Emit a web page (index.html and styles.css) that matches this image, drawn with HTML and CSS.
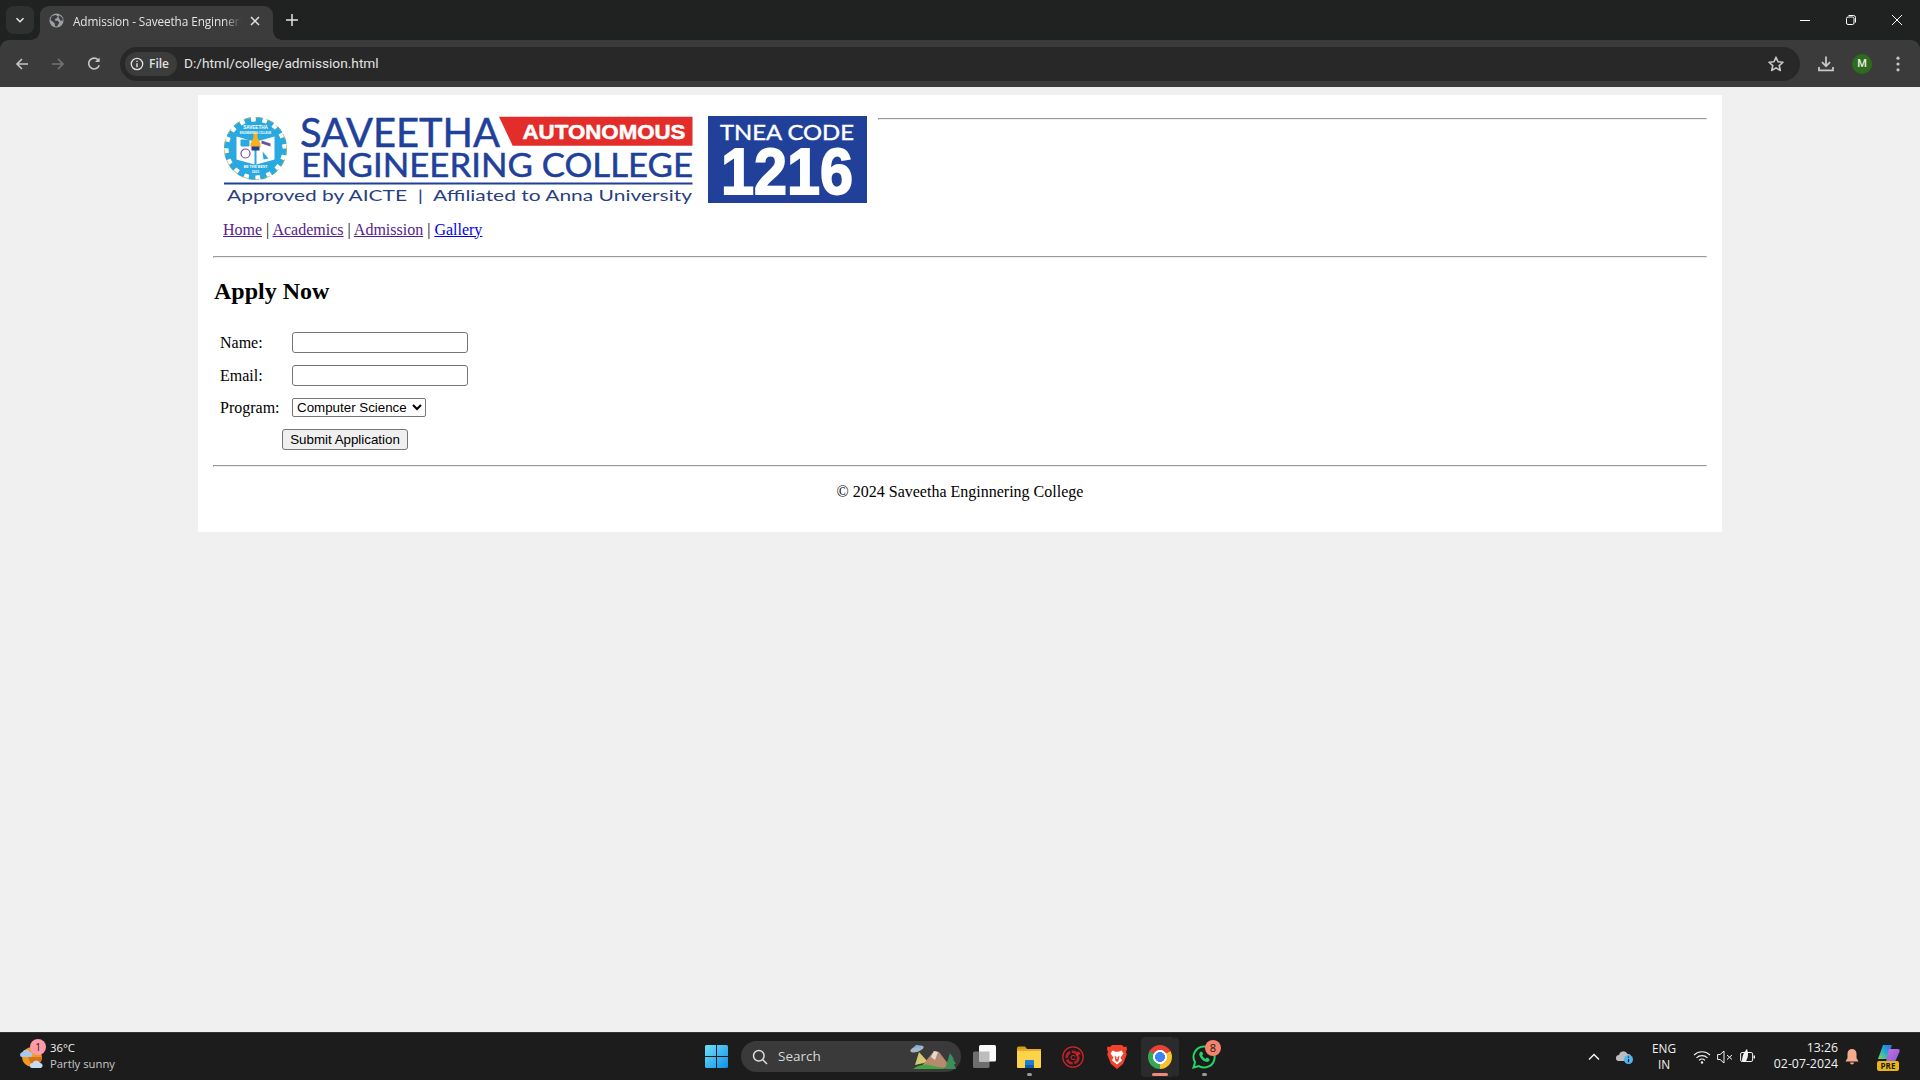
FILE: index.html
```html
<!DOCTYPE html>
<html lang="en">
<head>
<meta charset="utf-8">
<title>Admission - Saveetha Enginnering College</title>
<link rel="stylesheet" href="styles.css">
</head>
<body>
<div class="app">
  <div class="tabstrip">
    <div class="tabsearch"><svg width="12" height="12" viewBox="0 0 12 12"><path d="M2.5 4.200 6 7.700l3.500-3.500" fill="none" stroke="#e3e3e3" stroke-width="1.600"/></svg></div>
    <div class="tab">
      <svg class="favicon" width="15" height="15" viewBox="0 0 16 16"><circle cx="8" cy="8" r="7.500" fill="#9aa0a6"/><path d="M3 3.200 7 2.200 9.500 3.500 8 5.800 6.200 6.300 6.800 8.200 9.500 8.200 11 10.300 8.500 14.500 6.500 14 6 10.800 3.500 8.800 1.500 7.500zM11 2.500l3 2.500 1 3-2.500.2-1.500-2.200-1-1.800z" fill="#3c3c3c"/></svg>
      <span class="tabtitle">Admission - Saveetha Enginnering College</span>
      <svg class="tabclose" width="10" height="10" viewBox="0 0 10 10"><path d="M1 1l8 8M9 1 1 9" stroke="#e3e3e3" stroke-width="1.500"/></svg>
    </div>
    <svg class="newtab" width="14" height="14" viewBox="0 0 14 14"><path d="M7 1v12M1 7h12" stroke="#e3e3e3" stroke-width="1.500"/></svg>
    <div class="winctrls">
      <div class="winbtn"><svg width="12" height="12" viewBox="0 0 12 12"><path d="M1 6.500h10" stroke="#fff" stroke-width="1"/></svg></div>
      <div class="winbtn"><svg width="12" height="12" viewBox="0 0 12 12"><rect x="1.500" y="3" width="7.500" height="7.500" rx="1.500" fill="none" stroke="#fff"/><path d="M3.500 1.500h5a2 2 0 0 1 2 2v5" fill="none" stroke="#fff"/></svg></div>
      <div class="winbtn"><svg width="14" height="14" viewBox="0 0 14 14"><path d="M2 2l10 10M12 2 2 12" stroke="#fff" stroke-width="1"/></svg></div>
    </div>
  </div>

  <div class="toolbar">
    <div class="tbtn"><svg width="16" height="16" viewBox="0 0 16 16"><path d="M14 8H3M8 3 3 8l5 5" fill="none" stroke="#c7c7c7" stroke-width="1.600"/></svg></div>
    <div class="tbtn"><svg width="16" height="16" viewBox="0 0 16 16"><path d="M2 8h11M8 3l5 5-5 5" fill="none" stroke="#747474" stroke-width="1.600"/></svg></div>
    <div class="tbtn"><svg width="16" height="16" viewBox="0 0 16 16"><path d="M13.200 9.200A5.400 5.400 0 1 1 12 3.800" fill="none" stroke="#c7c7c7" stroke-width="1.600"/><path d="M13.600 1.500v4.600H9z" fill="#c7c7c7"/></svg></div>
    <div class="omnibox">
      <div class="filepill">
        <svg width="14" height="14" viewBox="0 0 14 14"><circle cx="7" cy="7" r="5.700" fill="none" stroke="#e3e3e3" stroke-width="1.300"/><path d="M7 6.200v4M7 3.700v1.400" stroke="#e3e3e3" stroke-width="1.400"/></svg>
        <span>File</span>
      </div>
      <span class="url">D:/html/college/admission.html</span>
      <svg class="star" width="18" height="18" viewBox="0 0 18 18"><path d="M9 2.200l2 4.600 5 .45-3.800 3.300 1.150 4.900L9 12.900l-4.350 2.550 1.150-4.900L2 7.250l5-.45z" fill="none" stroke="#c7c7c7" stroke-width="1.600" stroke-linejoin="round"/></svg>
    </div>
    <div class="tbtn"><svg width="18" height="18" viewBox="0 0 18 18"><path d="M9 1.500v9.500M5 7.200 9 11.200l4-4" fill="none" stroke="#c7c7c7" stroke-width="1.800"/><path d="M2 12v3.400h14V12" fill="none" stroke="#c7c7c7" stroke-width="1.800"/></svg></div>
    <div class="tbtn"><span class="avatar">M</span></div>
    <div class="tbtn"><svg width="6" height="16" viewBox="0 0 6 16"><circle cx="3" cy="2.200" r="1.600" fill="#c7c7c7"/><circle cx="3" cy="8" r="1.600" fill="#c7c7c7"/><circle cx="3" cy="13.800" r="1.600" fill="#c7c7c7"/></svg></div>
  </div>

  <div class="viewport">
    <main class="container">
      <header class="masthead">
        <svg class="logo" width="654" height="99" viewBox="0 0 654 99">
          <g transform="translate(42.5 38.5)">
            <circle r="27" fill="#2aa8e0"/>
            <circle r="28.500" fill="none" stroke="#2aa8e0" stroke-width="6" stroke-dasharray="6.500 4.700"/>
            <circle r="31" fill="none" stroke="#b9b84a" stroke-width="1" stroke-dasharray="6.500 4.700" opacity=".8"/>
            <path d="M-19 -12 -1 -7V16l-18-5zM19 -12 1 -7V16l18-5z" fill="#fff"/>
            <rect x="-15" y="-9" width="9" height="7" rx="1" fill="#2aa8e0"/>
            <circle cx="-10" cy="5" r="4.500" fill="none" stroke="#7a4fa0" stroke-width="1.200"/>
            <path d="M6 -8l9 3v3l-9-3z" fill="#6a4f9f"/>
            <path d="M7 3l6 7-5 1z" fill="#2aa8e0"/>
            <path d="M-2 -16h4v5l3 6v4h-10v-4l3-6z" fill="#f4b120"/>
            <rect x="-4" y="-2" width="8" height="4" fill="#2b3c8f"/>
            <text class="gear-txt" y="-19.500" text-anchor="middle" font-size="4.600">SAVEETHA</text>
            <text class="gear-txt" y="-14.500" text-anchor="middle" font-size="2.600">ENGINEERING COLLEGE</text>
            <text class="gear-txt" y="19" text-anchor="middle" font-size="3.600">BE THE BEST</text>
            <text class="gear-txt" y="24" text-anchor="middle" font-size="3.400">2001</text>
          </g>
          <text class="l-name" x="87" y="37" font-size="41.500" textLength="200" lengthAdjust="spacingAndGlyphs">SAVEETHA</text>
          <path d="M286 6.700H479.500V35.700H299.700z" fill="#e32d2a"/>
          <text class="l-auto" x="309.500" y="29.300" font-size="20" textLength="163" lengthAdjust="spacingAndGlyphs">AUTONOMOUS</text>
          <text class="l-name" x="88" y="67" font-size="33.500" textLength="392" lengthAdjust="spacingAndGlyphs">ENGINEERING COLLEGE</text>
          <rect x="11" y="72.500" width="468.500" height="2" fill="#21409a"/>
          <text class="l-sub" x="14" y="90.800" font-size="16" textLength="465" lengthAdjust="spacingAndGlyphs">Approved by AICTE  |  Affiliated to Anna University</text>
          <rect x="495" y="6" width="159" height="87" fill="#21409a"/>
          <text class="l-tnea" x="507" y="30" font-size="21" textLength="134" lengthAdjust="spacingAndGlyphs">TNEA CODE</text>
          <text class="l-code" x="508" y="84" font-size="65" textLength="132" lengthAdjust="spacingAndGlyphs">1216</text>
        </svg>
        <hr class="side-rule">
      </header>
      <nav class="mainnav">
        <a class="visited" href="#">Home</a> | <a class="visited" href="#">Academics</a> | <a class="visited" href="#">Admission</a> | <a class="fresh" href="#">Gallery</a>
      </nav>
      <hr class="rule">
      <h2 class="title">Apply Now</h2>
      <form>
        <table class="formtable">
          <tr><td class="lbl">Name:</td><td><input class="field" type="text"></td></tr>
          <tr><td class="lbl">Email:</td><td><input class="field" type="email"></td></tr>
          <tr><td class="lbl">Program:</td><td><select class="picker"><option>Computer Science</option></select></td></tr>
          <tr><td colspan="2" class="submitcell"><button class="submit" type="button">Submit Application</button></td></tr>
        </table>
      </form>
      <hr class="rule">
      <footer class="pagefoot">© 2024 Saveetha Enginnering College</footer>
    </main>
  </div>

  <div class="taskbar">
    <div class="tb-left">
      <div class="weather-ico">
        <svg width="24" height="24" viewBox="0 0 24 24"><circle cx="13" cy="12" r="10" fill="#f09a1e"/><path d="M13 22a10 10 0 0 0 10-10H9z" fill="#d9701a"/><path d="M1 10a3 3 0 0 1 2.500-3 4 4 0 0 1 7.500 0 2.600 2.600 0 0 1 1 5H3a2 2 0 0 1-2-2z" fill="#a9c8ee"/><path d="M11 21a2.600 2.600 0 0 1 2.500-3 4 4 0 0 1 7.500 0 2.600 2.600 0 0 1 1 5H13a2 2 0 0 1-2-2z" fill="#c4daf5"/></svg>
        <span class="wbadge">1</span>
      </div>
      <div class="weather-txt"><span class="w1">36°C</span><span class="w2">Partly sunny</span></div>
    </div>
    <svg class="winlogo" width="23" height="23" viewBox="0 0 23 23">
      <defs><linearGradient id="wg" x1="0" y1="0" x2="1" y2="1"><stop offset="0" stop-color="#6fe0f7"/><stop offset="1" stop-color="#0f8fe8"/></linearGradient></defs>
      <path d="M0 1.500A1.500 1.500 0 0 1 1.500 0H11V11H0zM12 0h9.500A1.500 1.500 0 0 1 23 1.500V11H12zM0 12H11V23H1.500A1.500 1.500 0 0 1 0 21.500zM12 12H23v9.500A1.500 1.500 0 0 1 21.500 23H12z" fill="url(#wg)"/>
    </svg>
    <div class="tsearch">
      <svg width="16" height="16" viewBox="0 0 16 16"><circle cx="6.800" cy="6.800" r="5.300" fill="none" stroke="#e0e0e0" stroke-width="1.500"/><path d="M10.800 10.800 15 15" stroke="#e0e0e0" stroke-width="1.500"/></svg>
      <span class="tsearch-txt">Search</span>
      <svg class="tsearch-art" width="48" height="28" viewBox="0 0 48 28"><path d="M10 9l9 10-13 3z" fill="#f1e27a" opacity=".85"/><ellipse cx="8" cy="6" rx="7" ry="2.800" fill="#a9b4c4" transform="rotate(-18 8 6)"/><path d="M5 5a3.500 3.500 0 0 1 6-2l1 1z" fill="#6fb3e6"/><path d="M12 24 25 8l5 1 10 13-4 3z" fill="#b58a6e"/><path d="M25 8l4 1-3 8-4-3z" fill="#e4d9cf"/><path d="M4 26c6-5 14-5 20-3l14 3z" fill="#3fa73f"/><path d="M41 10l4 6-1 0 3 5-2 0 2 5H36z" fill="#3b8f58"/></svg>
    </div>
    <svg class="app-task" width="23" height="23" viewBox="0 0 23 23"><rect y="6.500" width="16.500" height="16.500" rx="1.500" fill="#6e6e6e"/><rect x="6" width="17" height="16.500" rx="1.500" fill="#fafafa"/><rect x="6" y="6.500" width="10.500" height="10" fill="#bdbdbd"/></svg>
    <div class="app-files">
      <svg width="24" height="22" viewBox="0 0 24 22"><path d="M0 2a1.500 1.500 0 0 1 1.500-1.500H8l2.500 3H0z" fill="#d69a1c"/><rect y="3" width="24" height="19" rx="1" fill="#fbd449"/><rect y="3" width="24" height="2" fill="#e9a92a"/><rect x="8" y="14" width="9" height="8" rx="1" fill="#1e7ed2"/><rect x="8" y="19" width="9" height="3" fill="#0f5ea8"/></svg>
      <i class="rundot"></i>
    </div>
    <svg class="app-red" width="22" height="22" viewBox="0 0 22 22"><circle cx="11" cy="11" r="10.200" fill="none" stroke="#d6232a" stroke-width="1.200"/><circle cx="10.500" cy="11.500" r="5.800" fill="none" stroke="#b81e26" stroke-width="2.600" stroke-dasharray="7 1.600"/><path d="M14 10l2-5 3 3.200-2.200.3-.8 2.500z" fill="#d6232a"/><text class="red-c" x="8" y="14" font-size="7.500">C</text></svg>
    <svg class="app-brave" width="20" height="24" viewBox="0 0 20 24"><path d="M5 0h10l2 2 2.500-.5L20 4l-1 3 .8 2.500L16 19l-6 5-6-5L.2 9.500 1 7 0 4l.5-2.500L3 2z" fill="#f0432a"/><path d="M5.500 5.500l3 1.300h3l3-1.300 2 3-3 4 1.500 3-5 4-5-4 1.500-3-3-4z" fill="#fff"/><path d="M7.500 10.500 9.500 12v2h1v-2l2-1.500-1 5.500-1.500 1-1.500-1z" fill="#f0432a"/></svg>
    <div class="app-chrome">
      <span class="chrome-ico"></span>
      <i class="activebar"></i>
    </div>
    <i class="chrome-tile2"></i>
    <div class="app-wa">
      <svg width="24" height="24" viewBox="0 0 24 24"><path d="M12 1.500A10.500 10.500 0 0 0 3 17.300L1.500 22.500l5.400-1.400A10.500 10.500 0 1 0 12 1.500z" fill="none" stroke="#25d366" stroke-width="2"/><path d="M8.500 6.800c-1 .8-1.500 2-1 3.700 1 3 3.500 5.500 6.500 6.300 1.700.4 3-.3 3.500-1.500l-.2-1.500-2.600-1.200-1.100 1.300c-1.500-.6-2.800-1.900-3.500-3.400l1.100-1.200-1-2.600z" fill="#25d366"/></svg>
      <span class="wa-badge">8</span>
      <i class="rundot"></i>
    </div>
    <div class="tray">
      <svg class="t-chev" width="14" height="14" viewBox="0 0 14 14"><path d="M2 9.500 7 4.500l5 5" fill="none" stroke="#f2f2f2" stroke-width="1.500"/></svg>
      <div class="t-drive"><svg width="18" height="16" viewBox="0 0 18 16"><path d="M0 9a3 3 0 0 1 3-3 4.500 4.500 0 0 1 8.500-1A3.500 3.500 0 0 1 12 12H2.500A2.500 2.500 0 0 1 0 9z" fill="#bdbdbd"/><circle cx="12.500" cy="10.500" r="4.500" fill="#4fb6f0"/><path d="M12.500 7.500v1.300M12.500 10v3.300" stroke="#10232f" stroke-width="1.300"/></svg></div>
      <div class="t-lang"><span>ENG</span><span>IN</span></div>
      <div class="t-ico"><svg width="18" height="14" viewBox="0 0 18 14"><path d="M1 5a11.500 11.500 0 0 1 16 0M3.500 7.800a8 8 0 0 1 11 0M6 10.300a4.300 4.300 0 0 1 6 0" fill="none" stroke="#f2f2f2" stroke-width="1.100"/><circle cx="9" cy="12.500" r="1.200" fill="#f2f2f2"/></svg></div>
      <div class="t-ico"><svg width="16" height="14" viewBox="0 0 16 14"><path d="M.6 4.500h2.500L7 1v12L3.100 9.500H.6z" fill="none" stroke="#f2f2f2" stroke-width="1"/><path d="M10 5l5 4.500M15 5l-5 4.500" stroke="#f2f2f2" stroke-width="1"/></svg></div>
      <div class="t-ico"><svg width="16" height="15" viewBox="0 0 16 15"><rect x=".6" y="3.500" width="12" height="9" rx="1.500" fill="none" stroke="#f2f2f2"/><rect x="13.500" y="6.500" width="1.500" height="3" fill="#f2f2f2"/><path d="M2 12C2 6 5 2 7 0c1 3 2 7-1 12z" fill="#f2f2f2"/></svg></div>
      <div class="t-clock"><span>13:26</span><span>02-07-2024</span></div>
      <svg class="t-bell" width="14" height="16" viewBox="0 0 14 16"><path d="M7 0a4.500 4.500 0 0 1 4.500 4.500V9l2 3.500H.5L2.500 9V4.500A4.500 4.500 0 0 1 7 0z" fill="#f7ab8d"/><path d="M5 13.500h4a2 2 0 0 1-4 0z" fill="#f7ab8d"/></svg>
      <div class="t-copilot">
        <svg width="23" height="20" viewBox="0 0 23 20"><defs><linearGradient id="cpa" x1="0" y1="1" x2="1" y2="0"><stop offset="0" stop-color="#7ed957"/><stop offset=".55" stop-color="#23a5d8"/><stop offset="1" stop-color="#2a6fdb"/></linearGradient><linearGradient id="cpb" x1="0" y1="0" x2="1" y2="1"><stop offset="0" stop-color="#d66cd8"/><stop offset="1" stop-color="#7b5de0"/></linearGradient></defs><path d="M6 1h9l-5 14H1z" fill="url(#cpa)"/><path d="M12 5h9c2 0 2 2 1 4l-4 9H9z" fill="url(#cpb)"/></svg>
        <span class="pre">PRE</span>
      </div>
    </div>
  </div>
</div>
</body>
</html>
```

FILE: styles.css
```css
* { box-sizing: border-box; }
html, body { margin: 0; height: 100%; overflow: hidden; }
body { font-family: "Liberation Serif", serif; font-size: 16px; color: #000; }
.app { display: flex; flex-direction: column; height: 1080px; background: #202222; }

/* browser tab strip */
.tabstrip { display: flex; align-items: flex-end; height: 40px; padding-left: 6px; background: #202222; flex: none; }
.tabsearch { width: 28px; height: 28px; margin-bottom: 6px; border-radius: 8px; background: #2f3131; display: flex; align-items: center; justify-content: center; }
.tab { position: relative; z-index: 1; width: 233px; height: 34px; margin-left: 6px; padding: 0 0 5px 9px; display: flex; align-items: center; background: #3c3c3c; border-radius: 9px 9px 0 0; color: #e3e3e3; }
.tab::before, .tab::after { content: ""; position: absolute; bottom: 0; width: 9px; height: 9px; }
.tab::before { left: -9px; background: radial-gradient(circle at 0 0, transparent 8.500px, #3c3c3c 9px); }
.tab::after { right: -9px; background: radial-gradient(circle at 100% 0, transparent 8.500px, #3c3c3c 9px); }
.favicon { flex: none; }
.tabtitle { width: 168px; margin-left: 9px; font: 11.8px/16px "Open Sans", sans-serif; letter-spacing: -.1px; white-space: nowrap; overflow: hidden; -webkit-mask-image: linear-gradient(90deg, #000 90%, transparent); mask-image: linear-gradient(90deg, #000 90%, transparent); }
.tabclose { margin-left: 9px; flex: none; }
.newtab { margin: 0 0 13px 12px; flex: none; }
.winctrls { display: flex; margin-left: auto; align-self: stretch; }
.winbtn { width: 46px; display: flex; align-items: center; justify-content: center; }

/* browser toolbar */
.toolbar { display: flex; align-items: center; height: 47px; padding: 0 4px; background: #3b3b3b; border-radius: 9px 9px 0 0; flex: none; }
.tbtn { width: 36px; height: 36px; display: flex; align-items: center; justify-content: center; flex: none; }
.omnibox { flex: 1; height: 34px; margin: 0 8px; padding: 0 15px 0 5px; display: flex; align-items: center; background: #282828; border-radius: 17px; }
.filepill { display: flex; align-items: center; gap: 5px; height: 24px; padding: 0 8px 0 5px; border-radius: 12px; background: #3c3c3c; color: #e3e3e3; font: 600 12px "Open Sans", sans-serif; }
.url { margin: -2px 0 0 7px; color: #e3e3e3; font: 13.7px "Roboto", sans-serif; }
.star { margin-left: auto; }
.avatar { width: 20px; height: 20px; border-radius: 50%; background: #2e6b1f; color: #e8f0e3; font: 500 11px/20px "Roboto", sans-serif; text-align: center; }

/* page */
.viewport { flex: 1; min-height: 0; padding-top: 8px; background: #f0f0f0; }
.container { width: 1524px; margin: 0 auto; padding: 15px; background: #fff; }
.masthead { display: flex; align-items: flex-start; }
.logo { display: block; flex: none; }
.side-rule { flex: 1; margin: 8px 0 0 11px; }
.gear-txt { font-family: "Liberation Sans", sans-serif; fill: #fff; font-weight: 700; }
.l-name { font-family: "Lato", sans-serif; fill: #21409a; stroke: #21409a; stroke-width: .5px; }
.l-auto { font-family: "Liberation Sans", sans-serif; font-weight: 700; fill: #fff; stroke: #fff; stroke-width: .5px; }
.l-sub { font-family: "Lato", sans-serif; fill: #2a3f7f; white-space: pre; }
.l-tnea { font-family: "Lato", sans-serif; fill: #fff; stroke: #fff; stroke-width: .4px; }
.l-code { font-family: "Liberation Sans", sans-serif; font-weight: 700; fill: #fff; stroke: #fff; stroke-width: 1.800px; }
.mainnav { padding: 11.500px 10px 9.500px; line-height: 18px; }
.visited { color: #551a8b; }
.fresh { color: #0000ee; }
.rule { margin: 8px 0; }
.title { margin: 20px 0 20px 1px; font-size: 24px; line-height: 27px; font-weight: 700; }
.formtable { border-spacing: 2px; }
.formtable td { padding: 5px; }
.formtable .lbl { padding-right: 5.500px; }
.formtable .submitcell { padding-left: 7px; text-align: center; }
.field { display: block; width: 176px; height: 21px; padding: 1px 2px; border: 1px solid #767676; border-radius: 3px; background: #fff; }
.picker { display: block; width: 134px; height: 19px; border: 1px solid #767676; border-radius: 2px; background: #fff; font: 13.33px "Liberation Sans", sans-serif; color: #000; }
.submit { width: 126px; height: 21px; padding: 1px 0; border: 1px solid #767676; border-radius: 3px; background: #efefef; font: 13.33px "Liberation Sans", sans-serif; color: #000; }
.pagefoot { padding: 8px 0 16px; line-height: 18px; text-align: center; }

/* taskbar */
.taskbar { display: flex; align-items: center; height: 48px; background: #1c1c1c; border-top: 1px solid #333; color: #f2f2f2; flex: none; font-family: "Open Sans", sans-serif; }
.tb-left { width: 705px; padding-left: 19px; display: flex; align-items: center; flex: none; }
.weather-ico { position: relative; width: 24px; height: 24px; }
.wbadge { position: absolute; left: 11px; top: -6px; width: 16px; height: 16px; border-radius: 50%; background: #ff9aa6; color: #1c1c1c; font-size: 10px; line-height: 16px; text-align: center; }
.weather-txt { margin: -2px 0 0 7px; display: flex; flex-direction: column; font-size: 11.300px; line-height: 16px; }
.w2 { color: #c8c8c8; }
.winlogo { flex: none; }
.tsearch { width: 220px; height: 31px; margin-left: 13px; padding-left: 11px; display: flex; align-items: center; border-radius: 16px; background: #3a3a3a; flex: none; }
.tsearch-txt { margin: -2px 0 0 10px; font-size: 13.5px; color: #d8d8d8; }
.tsearch-art { margin-left: auto; margin-right: 4px; }
.app-task { margin-left: 12px; flex: none; }
.app-files { position: relative; margin-left: 21px; width: 24px; height: 22px; flex: none; }
.rundot { position: absolute; left: 50%; bottom: -8px; width: 5px; height: 3px; margin-left: -2.500px; border-radius: 2px; background: #9a9a9a; }
.app-red { margin-left: 21px; flex: none; }
.app-brave { margin-left: 23px; flex: none; }
.app-chrome { position: relative; width: 34px; height: 40px; margin-left: 14px; padding-left: 7px; display: flex; align-items: center; border-radius: 4px; background: #2b2b2b; flex: none; }
.chrome-ico { width: 24px; height: 24px; border-radius: 50%; background: radial-gradient(circle, #3f83f0 0 4.800px, #fff 5.200px 6.800px, transparent 7.200px), conic-gradient(#ea4335 0 60deg, #fbc02d 60deg 180deg, #34a853 180deg 300deg, #ea4335 300deg); }
.activebar { position: absolute; left: 11px; bottom: 1px; width: 16px; height: 3px; border-radius: 2px; background: #f08a78; }
.chrome-tile2 { width: 4px; height: 40px; border-radius: 0 4px 4px 0; background: #2b2b2b; flex: none; }
.app-wa { position: relative; width: 24px; height: 24px; margin-left: 13px; flex: none; }
.wa-badge { position: absolute; left: 13px; top: -5px; width: 16px; height: 16px; border-radius: 50%; background: #f4826c; color: #1c1c1c; font-size: 11px; line-height: 16px; text-align: center; }
.app-wa .rundot { bottom: -7px; left: 12px; }
.tray { margin-left: auto; padding-right: 14px; display: flex; align-items: center; font-size: 11.8px; }
.t-chev { margin: 0 5px; }
.t-drive { width: 38px; display: flex; justify-content: center; }
.t-lang { width: 40px; margin-top: -2px; display: flex; flex-direction: column; align-items: center; line-height: 16px; }
.t-ico { width: 22px; margin-left: 1px; display: flex; justify-content: center; }
.t-lang + .t-ico { margin-left: 7px; }
.t-clock { width: 79px; margin-top: -2px; display: flex; flex-direction: column; align-items: flex-end; line-height: 16px; font-size: 12.300px; }
.t-bell { margin-left: 6.500px; }
.t-copilot { position: relative; width: 36px; height: 30px; margin-left: 11.500px; display: flex; justify-content: center; padding-top: 2px; }
.pre { position: absolute; left: 7px; bottom: 1px; width: 22px; height: 10px; border-radius: 2px; background: #e8b517; color: #1c1c1c; font-size: 8px; font-weight: 700; line-height: 10px; text-align: center; }
.red-c { font-family: "Liberation Sans", sans-serif; font-weight: 700; fill: #d6232a; }
```
